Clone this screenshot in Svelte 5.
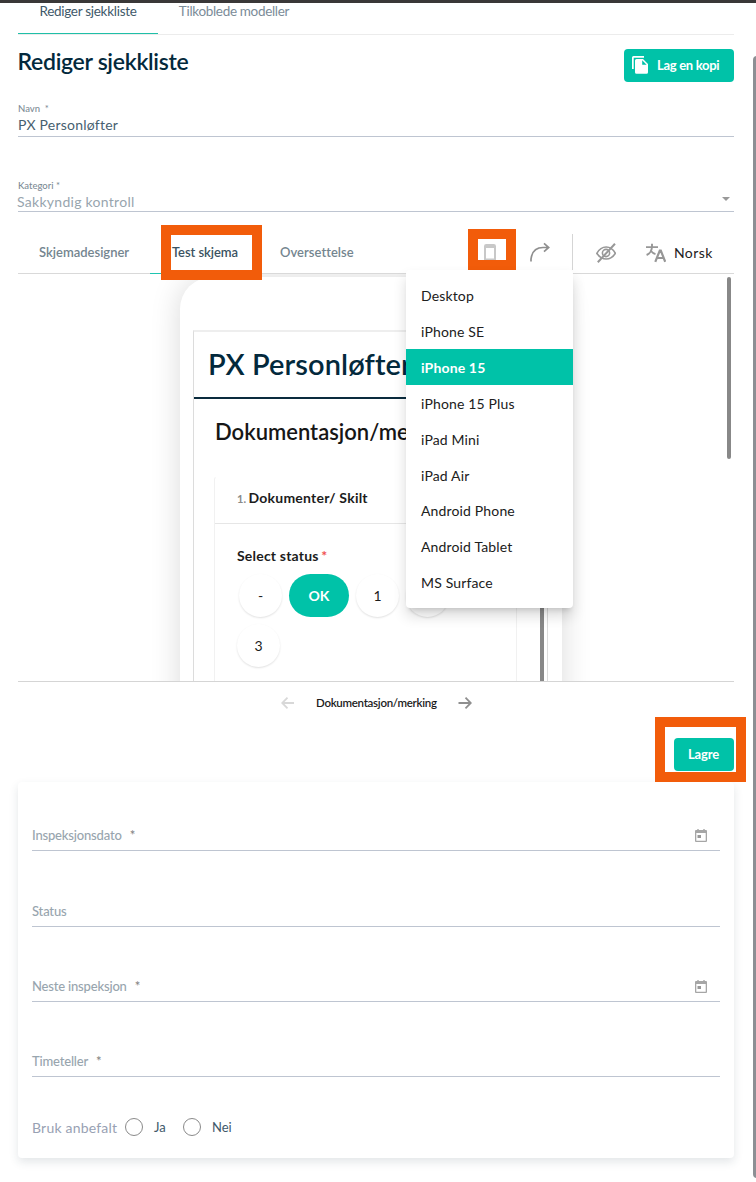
<script>
  const devices = ['Desktop', 'iPhone SE', 'iPhone 15', 'iPhone 15 Plus', 'iPad Mini', 'iPad Air', 'Android Phone', 'Android Tablet', 'MS Surface'];
  let device = $state('iPhone 15');
  const fields = [
    { label: 'Inspeksjonsdato', required: true, date: true },
    { label: 'Status', required: false, date: false },
    { label: 'Neste inspeksjon', required: true, date: true },
    { label: 'Timeteller', required: true, date: false }
  ];
</script>

<div class="page">
  <div class="topbar"></div>
  <nav class="tabs">
    <div class="tab active"><span>Rediger sjekkliste</span></div>
    <div class="tab"><span class="t2">Tilkoblede modeller</span></div>
  </nav>

  <header class="head">
    <h1>Rediger sjekkliste</h1>
    <button class="btn copy">
      <svg width="16" height="18" viewBox="0 0 16 18"><path d="M0 13V1.5Q0 0 1.5 0H12V1.7H1.7V13Z" fill="#fff" /><path d="M4.5 3H11l5 5v8.2q0 1.5-1.5 1.5h-10Q3 17.700 3 16.200V4.500Q3 3 4.500 3ZM10.200 4.300v4.400h4.400Z" fill="#fff" fill-rule="evenodd" /></svg>
      <span>Lag en kopi</span>
    </button>
  </header>

  <div class="input name"><label for="n">Navn &nbsp;*</label><div class="val" id="n">PX Personløfter</div></div>
  <div class="input cat"><label for="k">Kategori *</label>
    <div class="val" id="k"><span>Sakkyndig kontroll</span><i class="caret"></i></div>
  </div>

  <div class="toolbar">
    <div class="stab s1"><span>Skjemadesigner</span></div>
    <div class="stab s2"><span>Test skjema</span><b class="mark"></b></div>
    <div class="stab s3"><span>Oversettelse</span></div>
    <div class="tools">
      <div class="device">
        <svg width="12" height="18" viewBox="0 0 12 18"><path d="M2.200 0h7.600Q12 0 12 2.200v13.600Q12 18 9.800 18H2.200Q0 18 0 15.800V2.200Q0 0 2.200 0ZM2 4v10.500h8V4Z" fill="#c8c8c8" fill-rule="evenodd" /></svg>
        <b class="mark"></b>
        <div class="menu">
          {#each devices as d}
            <div class="item" class:sel={d === device}>{d}</div>
          {/each}
        </div>
      </div>
      <svg class="redo" width="20" height="20" viewBox="0 0 20 20" fill="none" stroke="#8f8f8f" stroke-width="1.700"><path d="M1 19.500V17Q2.500 5.500 13 5.500H18.500M14 1.300l4.700 4.200-4.700 4.200" /></svg>
      <i class="sep"></i>
      <svg class="eye" width="20" height="20" viewBox="0 0 20 20" fill="none" stroke="#979797" stroke-width="1.600"><path d="M.8 10.300Q4.500 4 10.200 4t9.200 6.300Q15.800 16 10.200 16T.8 10.300Z" /><circle cx="10" cy="10" r="3.600" /><path d="M1.800 19.200 19 .800" stroke-width="2" /></svg>
      <svg class="lang" width="20" height="20" viewBox="0 0 20 20" fill="none" stroke="#979797"><path d="M0 4.100H12M6 .800V4M6 4Q5.500 10 .600 12M4.500 7.500Q7 10.500 9.500 11.200" stroke-width="1.900" /><path d="M9.300 18.800 13.800 7.500h1L19.200 18.800M10.800 15h7" stroke-width="2.200" /></svg>
      <span class="norsk">Norsk</span>
    </div>
  </div>

  <div class="preview">
    <div class="phone">
      <div class="screen">
        <div class="ptitle"><span>PX Personløfter</span></div>
        <h2>Dokumentasjon/merking</h2>
        <div class="panel">
          <div class="q"><small>1.</small> <span>Dokumenter/ Skilt</span></div>
          <div class="status">Select status <em>*</em></div>
          <div class="opts">
            <div class="o">-</div><div class="o ok">OK</div><div class="o">1</div><div class="o"></div><div class="o three">3</div>
          </div>
        </div>
        <i class="pscroll"></i>
      </div>
    </div>
    <i class="vscroll"></i>
  </div>

  <div class="pager">
    <svg width="14" height="12" viewBox="0 0 14 12" fill="none" stroke="#d8d8d8" stroke-width="1.800"><path d="M13 6H1.500M6.500 .700 1.200 6l5.300 5.300" /></svg>
    <span>Dokumentasjon/merking</span>
    <svg width="14" height="12" viewBox="0 0 14 12" fill="none" stroke="#8f8f8f" stroke-width="1.800"><path d="M.500 6H12.500M7.500 .700 12.800 6l-5.300 5.300" /></svg>
  </div>

  <div class="actions"><button class="btn save"><span>Lagre</span></button><b class="mark"></b></div>

  <section class="card">
    {#each fields as f}
      <div class="field">
        <span class="fl">{f.label}</span>
        {#if f.required}<span class="req">*</span>{/if}
        {#if f.date}
          <svg width="12" height="13" viewBox="0 0 12 13"><path d="M2.300 0h1.400v1h4.600V0h1.400v1H11q1 0 1 1v10q0 1-1 1H1q-1 0-1-1V2q0-1 1-1h1.300ZM1.300 4v7.700h9.400V4Z" fill="#a6a6a6" fill-rule="evenodd" /><path d="M2.500 6h3.500v3H2.500Z" fill="#999" /></svg>
        {/if}
      </div>
    {/each}
    <div class="radios">
      <span class="rl">Bruk anbefalt</span><i class="r"></i><span class="ja">Ja</span><i class="r"></i><span class="nei">Nei</span>
    </div>
  </section>
  <i class="pagescroll"></i>
</div>

<style>
  :global(body) { margin: 0; background: #fff; overflow: hidden; }
  * { box-sizing: border-box; }
  .page { position: relative; width: 756px; height: 1182px; padding: 0 22px 0 18px; overflow: hidden; font-family: Lato, sans-serif; color: #4a6070; background: #fff; }
  span { white-space: nowrap; }
  .topbar { height: 3px; margin: 0 -22px 0 -18px; background: #3a3838; }
  .tabs { display: flex; height: 32px; border-bottom: 1px solid #ececec; font-size: 13.500px; letter-spacing: -0.280px; line-height: 16px; }
  .tab { width: 140px; text-align: center; color: #7b8c98; }
  .tab.active { color: #41596a; height: 31px; border-bottom: 1px solid #1fbfa8; }
  .t2 { margin-left: 12px; letter-spacing: -0.320px; }
  .head { display: flex; justify-content: space-between; height: 65px; padding-top: 14px; }
  h1 { margin: -2px 0 0 -0.500px; font-size: 23px; line-height: 28px; font-weight: 600; color: #03293c; letter-spacing: -0.300px; }
  .btn { display: flex; align-items: center; height: 33px; border: 0; border-radius: 4px; background: #00c2a8; color: #fff; font: 700 13px Lato, sans-serif; letter-spacing: -0.300px; }
  .copy { width: 110px; padding: 0 0 1px 8px; gap: 9px; }
  .input { border-bottom: 1px solid #bec5d1; display: flex; flex-direction: column; }
  .input label { font-size: 9.500px; line-height: 12px; font-weight: 500; color: #7d8b96; }
  .input .val { font-size: 14px; line-height: 18px; color: #46606f; }
  .name { height: 37px; padding-top: 3px; }
  .name .val { margin-top: 1px; letter-spacing: 0.230px; }
  .cat { height: 75px; padding-top: 43px; }
  .cat .val { display: flex; justify-content: space-between; margin: 1px 0 0 -1px; color: #98a5ae; letter-spacing: 0.280px; }
  .caret { width: 0; height: 0; margin: 4px 4px 0 0; border: 4px solid transparent; border-top-color: #999; border-bottom: 0; }
  .toolbar { position: relative; z-index: 3; display: flex; height: 62px; border-bottom: 1px solid #d9d9d9; }
  .stab { position: relative; height: 62px; padding-top: 31px; font-size: 13px; line-height: 18px; font-weight: 600; color: #74858f; letter-spacing: 0; }
  .s1 { width: 132px; padding-left: 21px; }
  .s2 { width: 109px; padding-left: 22px; color: #3b5362; border-bottom: 1px solid #1fc5b0; letter-spacing: -.050px; }
  .s3 { width: 190px; padding-left: 21px; letter-spacing: .030px; }
  .mark { position: absolute; border: 10px solid #f25c0a; }
  .s2 .mark { left: 11px; top: 13px; width: 101px; height: 55px; }
  .tools { display: flex; flex: 1; height: 61px; margin-left: 18px; }
  .device { position: relative; width: 63px; padding: 32px 0 0 17px; }
  .device .mark { left: 1px; top: 17px; width: 48px; height: 41px; }
  .device svg { display: block; }
  .menu { position: absolute; z-index: 5; left: -61px; top: 58px; width: 167px; height: 338px; padding-top: 7.300px; background: #fff; border-radius: 4px; box-shadow: 0 5px 5px -3px rgba(0,0,0,.12), 0 8px 14px rgba(0,0,0,.14); color: #202020; }
  .item { height: 35.850px; padding-left: 15px; font-size: 14px; line-height: 37px; letter-spacing: 0.150px; }
  .sel { background: #00c2a8; color: #fff; font-weight: 700; }
  .redo { margin-top: 30px; }
  .sep { width: 1px; height: 36px; margin: 22px 0 0 22px; background: #d5d5d5; }
  .eye { margin: 31px 0 0 23px; }
  .lang { margin: 31px 0 0 30px; }
  .norsk { margin: 32px 0 0 8px; font-size: 14px; line-height: 18px; letter-spacing: .400px; color: #222; }
  .preview { position: relative; height: 408px; overflow: hidden; border-bottom: 1px solid #d5d5d5; padding: 3px 0 0 162px; }
  .phone { width: 382px; height: 600px; border-radius: 32px; padding: 53px 13px 0; background: #fff; box-shadow: 0 0 30px rgba(0,0,0,.15); }
  .screen { position: relative; width: 355px; height: 540px; border: 1px solid #dcdcdc; border-top: 2px solid #eee; }
  .ptitle { height: 67px; border-bottom: 2px solid #0a2b3d; padding: 12px 0 0 14px; font-size: 29px; line-height: 40px; font-weight: 600; color: #03293c; letter-spacing: .100px; }
  h2 { margin: 19px 0 0 21px; width: 310px; font-size: 22px; line-height: 28px; font-weight: 600; color: #161616; letter-spacing: 0; }
  .panel { width: 303px; height: 320px; margin: 30px 0 0 20px; border: 1px solid #f1f1f1; border-top-color: transparent; border-radius: 4px; color: #1c1c1c; }
  .q { height: 47px; border-bottom: 1px solid #e6e6e6; padding: 12px 0 0 22px; font-size: 14px; line-height: 18px; font-weight: 700; letter-spacing: .220px; }
  .q small { font-size: 11px; font-weight: 700; color: #8a8a8a; margin-right: -1.500px; }
  .status { padding: 23px 0 0 22px; font-size: 14px; line-height: 18px; font-weight: 700; letter-spacing: .200px; }
  .status em { color: #f05050; font-style: normal; font-weight: 700; margin-left: -1px; }
  .opts { display: flex; flex-wrap: wrap; gap: 7px; padding: 9px 30px 0 24px; }
  .o { width: 43px; height: 43px; line-height: 43px; text-align: center; border-radius: 22px; font-size: 14px; box-shadow: 0 1px 2px rgba(0,0,0,.12); }
  .ok { width: 60px; background: #00c2a8; color: #fff; font-weight: 700; box-shadow: none; }
  .three { margin-left: -2px; }
  .pscroll { position: absolute; left: 346px; top: 70px; width: 4px; height: 470px; background: #888; }
  .vscroll { position: absolute; left: 709px; top: 3px; width: 4px; height: 182px; border-radius: 2px; background: #888; }
  .pager { display: flex; align-items: center; height: 43px; padding: 0 0 1px 262.500px; gap: 21.500px; font-size: 11.500px; font-weight: 600; color: #1c1c1c; letter-spacing: -0.290px; }
  .pager span { padding-bottom: 1px; }
  .actions { position: relative; display: flex; justify-content: flex-end; height: 57px; padding-top: 13px; z-index: 2; }
  .save { width: 60px; justify-content: center; padding: 0 1px 1px 0; letter-spacing: -0.150px; }
  .actions .mark { left: 637px; top: -8px; width: 91px; height: 65px; }
  .card { height: 376px; border-radius: 4px; padding: 0 14px; box-shadow: 0 4px 10px rgba(40,60,80,.13); }
  .field { display: flex; height: 75px; align-items: flex-end; padding-bottom: 6px; border-bottom: 1px solid #bec5d1; font-size: 13px; line-height: 18px; font-weight: 500; letter-spacing: -0.180px; color: #98a5ae; }
  .field:first-child { height: 69px; }
  .field:nth-child(2) { height: 76px; }
  .req { margin-left: 8px; color: #808080; }
  .field svg { margin: 0 13px 2px auto; }
  .radios { display: flex; align-items: center; height: 100px; font-size: 14px; color: #41596a; }
  .rl { width: 93px; color: #98a1b3; letter-spacing: .200px; }
  .r { width: 18px; height: 18px; border: 1px solid #8a8a8a; border-radius: 50%; }
  .ja { width: 29px; margin-left: 11px; font-size: 13px; }
  .nei { margin-left: 11px; font-size: 13px; }
  .pagescroll { position: absolute; left: 752.500px; top: 56px; width: 8px; height: 1122px; border-radius: 4px; background: #8d8f94; }
</style>
